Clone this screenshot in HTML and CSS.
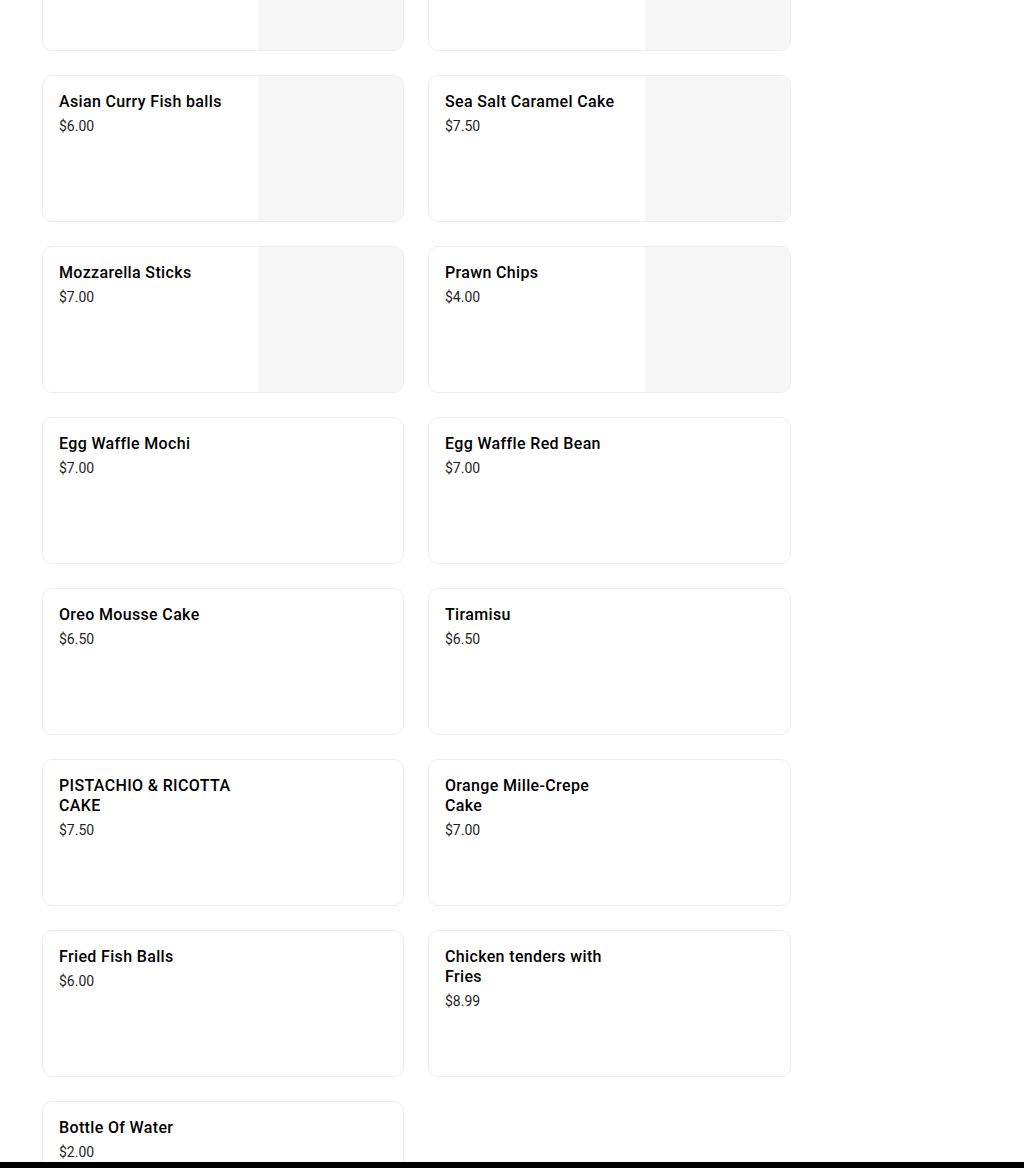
FILE: index.html
```html
<!DOCTYPE html>
<html>
<head>
<meta charset="utf-8">
<link rel="stylesheet" href="styles.css">
</head>
<body>
<div class="page">
  <ul class="grid">
    <li class="card"><div class="info"><div class="name">Spring Rolls</div><div class="price">$5.00</div></div><div class="thumb filled"></div></li>
    <li class="card"><div class="info"><div class="name">Matcha Cake</div><div class="price">$7.50</div></div><div class="thumb filled"></div></li>
    <li class="card"><div class="info"><div class="name">Asian Curry Fish balls</div><div class="price">$6.00</div></div><div class="thumb filled"></div></li>
    <li class="card"><div class="info"><div class="name">Sea Salt Caramel Cake</div><div class="price">$7.50</div></div><div class="thumb filled"></div></li>
    <li class="card"><div class="info"><div class="name">Mozzarella Sticks</div><div class="price">$7.00</div></div><div class="thumb filled"></div></li>
    <li class="card"><div class="info"><div class="name">Prawn Chips</div><div class="price">$4.00</div></div><div class="thumb filled"></div></li>
    <li class="card"><div class="info"><div class="name">Egg Waffle Mochi</div><div class="price">$7.00</div></div><div class="thumb"></div></li>
    <li class="card"><div class="info"><div class="name">Egg Waffle Red Bean</div><div class="price">$7.00</div></div><div class="thumb"></div></li>
    <li class="card"><div class="info"><div class="name">Oreo Mousse Cake</div><div class="price">$6.50</div></div><div class="thumb"></div></li>
    <li class="card"><div class="info"><div class="name">Tiramisu</div><div class="price">$6.50</div></div><div class="thumb"></div></li>
    <li class="card"><div class="info"><div class="name">PISTACHIO &amp; RICOTTA CAKE</div><div class="price">$7.50</div></div><div class="thumb"></div></li>
    <li class="card"><div class="info"><div class="name">Orange Mille-Crepe Cake</div><div class="price">$7.00</div></div><div class="thumb"></div></li>
    <li class="card"><div class="info"><div class="name">Fried Fish Balls</div><div class="price">$6.00</div></div><div class="thumb"></div></li>
    <li class="card"><div class="info"><div class="name">Chicken tenders with Fries</div><div class="price">$8.99</div></div><div class="thumb"></div></li>
    <li class="card"><div class="info"><div class="name">Bottle Of Water</div><div class="price">$2.00</div></div><div class="thumb"></div></li>
  </ul>
</div>
<div class="bottom-bar"></div>
</body>
</html>
```

FILE: styles.css
```css
html, body {
  margin: 0;
  padding: 0;
  background: #ffffff;
  font-family: Roboto, "Liberation Sans", Arial, sans-serif;
  color: #000000;
  overflow: hidden;
}

.page {
  padding: 0 0 0 42px;
  width: 749px;
}

.grid {
  list-style: none;
  margin: -96px 0 0 0;
  padding: 0;
  display: grid;
  grid-template-columns: 362px 363px;
  column-gap: 24px;
  row-gap: 24px;
}

.card {
  display: flex;
  height: 147px;
  box-sizing: border-box;
  border: 1px solid #ededed;
  border-radius: 10px;
  overflow: hidden;
  background: #ffffff;
}

.info {
  flex: 1;
  padding: 16px;
  min-width: 0;
}

.name {
  font-size: 16px;
  font-weight: 500;
  line-height: 20px;
  letter-spacing: 0.35px;
  color: #000000;
}

.price {
  margin-top: 4px;
  font-size: 14px;
  line-height: 20px;
  color: #1f1f1f;
}

.thumb {
  flex: 0 0 145px;
  height: 100%;
}

.thumb.filled {
  background: #f6f6f6;
}

.bottom-bar {
  position: fixed;
  left: 0;
  right: 0;
  bottom: 0;
  height: 6px;
  background: #000000;
}
```
